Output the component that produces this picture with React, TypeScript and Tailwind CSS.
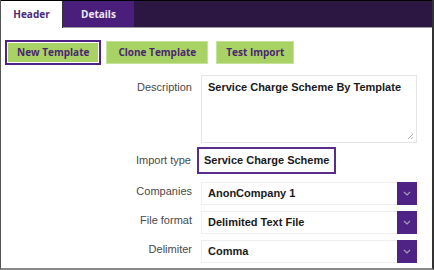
import React from 'react';

const tahoma = { fontFamily: '"Open Sans", "DejaVu Sans", sans-serif' };

const Chevron: React.FC = () => (
  <svg width="8" height="5" viewBox="0 0 8 5" fill="none">
    <path d="M1 1l3 3 3-3" stroke="#a99bbd" strokeWidth="1.2" />
  </svg>
);

const SelectRow: React.FC<{ label: string; value: string }> = ({ label, value }) => (
  <div className="flex items-center h-[29px]">
    <div className="w-[200px] pr-[9px] text-right text-[11px] text-[#4a4a4a] -mt-[4px]">{label}</div>
    <div className="w-[216px] h-[23px] border-y border-l border-[#eeeeee] flex items-center justify-between bg-white">
      <span className="pl-[6px] text-[11px] font-bold text-[#1a1a1a]">{value}</span>
      <span className="w-[20px] h-[23px] -my-px bg-[#4f2385] flex items-center justify-center">
        <Chevron />
      </span>
    </div>
  </div>
);

const App: React.FC = () => {
  return (
    <div className="w-[434px] h-[270px] bg-white border-l border-r-2 border-b-2 border-l-[#555] border-r-[#333] border-b-[#888] overflow-hidden" style={{ fontFamily: '"Liberation Sans", Arial, sans-serif' }}>
      <div className="h-[28px] flex bg-[#2c1642] border-t border-black border-b border-b-[#999]">
        <div className="w-[62px] bg-white -mb-px flex items-center justify-center border-r border-[#333] text-[10px] font-bold text-[#4b2a78]" style={tahoma}>
          Header
        </div>
        <div className="w-[71px] bg-[#4a1f7b] flex items-center justify-center text-[10px] font-bold text-[#eee8f5]" style={tahoma}>
          Details
        </div>
      </div>

      <div className="flex gap-[5px] pl-[4px] pt-[12px]" style={tahoma}>
        <button className="h-[25px] border-2 border-[#4f2385] bg-white p-px">
          <span className="block h-full px-[9px] leading-[19px] bg-[#a8d264] text-[10px] font-bold text-[#4b2670]">New Template</span>
        </button>
        <button className="h-[23px] mt-px px-[11px] bg-[#a8d264] text-[10px] font-bold text-[#4b2670] border border-[#c5e29b]">Clone Template</button>
        <button className="h-[23px] mt-px ml-[3px] px-[9px] bg-[#a8d264] text-[10px] font-bold text-[#4b2670] border border-[#c5e29b]">Test Import</button>
      </div>

      <div className="pt-[10px]">
        <div className="flex">
          <div className="w-[200px] pr-[9px] pt-[4px] text-right text-[11px] text-[#4a4a4a]">Description</div>
          <div className="w-[216px] h-[68px] border border-[#e4e4e4] relative px-[6px] pt-[3px] text-[11px] font-bold text-[#1a1a1a]">
            Service Charge Scheme By Template
            <svg className="absolute right-[2px] bottom-[2px]" width="7" height="7" viewBox="0 0 7 7">
              <path d="M6 1L1 6M6 4L4 6" stroke="#999" strokeWidth="0.8" />
            </svg>
          </div>
        </div>

        <div className="flex items-center mt-[4px]">
          <div className="w-[196px] pr-[6px] text-right text-[11px] text-[#4a4a4a]">Import type</div>
          <div className="h-[27px] px-[5px] flex items-center border-2 border-[#5a2d8c] text-[11px] font-bold text-[#1a1a1a]">
            Service Charge Scheme
          </div>
        </div>

        <div className="mt-[5px]">
          <SelectRow label="Companies" value="AnonCompany 1" />
          <SelectRow label="File format" value="Delimited Text File" />
          <SelectRow label="Delimiter" value="Comma" />
        </div>
      </div>
    </div>
  );
};

export default App;
